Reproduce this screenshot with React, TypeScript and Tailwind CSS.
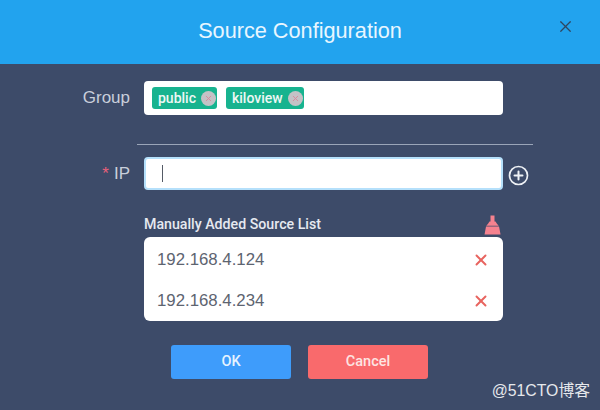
import React from 'react';
import { X } from 'lucide-react';

const FONT = "font-['Liberation_Sans',Arial,sans-serif]";

const Tag: React.FC<{ label: string }> = ({ label }) => (
  <span className="flex h-[22px] items-center rounded-[3px] bg-[#17b38f] pl-[6px] pr-[1px] font-['Roboto',sans-serif] text-[14px] font-medium text-[#eef8f5]">
    {label}
    <span className="ml-[5px] flex h-[15px] w-[15px] items-center justify-center rounded-full bg-[#c4c2c6]">
      <X size={9} strokeWidth={2.5} className="text-[#d98a9c]" />
    </span>
  </span>
);

const SourceRow: React.FC<{ ip: string }> = ({ ip }) => (
  <div className="flex h-[41px] items-center justify-between pl-[13px] pr-[13px] text-[16.8px] text-[#5d6470]">
    <span>{ip}</span>
    <X size={18} strokeWidth={2.6} className="text-[#e8645f]" />
  </div>
);

export default function App() {
  return (
    <div className={`relative flex h-[410px] w-[600px] flex-col overflow-hidden bg-[#3d4b69] ${FONT}`}>
      <div className="relative flex h-[64px] shrink-0 items-center justify-center bg-[#22a3ee] pb-[2px] text-[21.7px] text-[#e8f6ff]">
        Source Configuration
        <X size={19} strokeWidth={1.5} className="absolute right-[25px] top-[17px] text-[#2f4660]" />
      </div>

      <div className="mt-[17px] flex items-center">
        <div className="w-[130px] text-right text-[17px] text-[#c9cfdb]">Group</div>
        <div className="ml-[14px] flex h-[34px] w-[359px] items-center gap-[9px] rounded-[4px] bg-white pl-[8px]">
          <Tag label="public" />
          <Tag label="kiloview" />
        </div>
      </div>

      <div className="ml-[137px] mt-[29px] h-[1px] w-[396px] bg-[#9aa5b8]" />

      <div className="mt-[12px] flex items-center">
        <div className="w-[130px] text-right text-[17px] text-[#c9cfdb]">
          <span className="mr-[5px] text-[#e8607a]">*</span>IP
        </div>
        <div className="ml-[14px] flex h-[33px] w-[359px] items-center rounded-[4px] border-2 border-[#b5e0fb] bg-white pl-[16px]">
          <span className="h-[17px] w-[1px] bg-[#555b66]" />
        </div>
        <svg width="21" height="21" viewBox="0 0 21 21" fill="none" stroke="#eef1f5" strokeWidth="1.7" strokeLinecap="round" className="ml-[5px] mt-[4px]">
          <circle cx="10.5" cy="10.5" r="9" />
          <path d="M10.5 6.5v8M6.5 10.5h8" strokeWidth="2" />
        </svg>
      </div>

      <div className="ml-[144px] mt-[24px] flex h-[22px] w-[359px] items-center justify-between">
        <span className="font-['Roboto',sans-serif] text-[14.2px] font-medium text-[#e6e9f0]">Manually Added Source List</span>
        <svg width="17" height="20" viewBox="0 0 17 20" fill="#f5828f" className="mr-[2px]">
          <path d="M6.5 0.5h4v6.5h-4z" />
          <path d="M5.5 6.5h6c.8 1.6 2 3 3.2 4.2H2.3C3.5 9.5 4.7 8.1 5.5 6.5z" />
          <path d="M2 11.6h13L16.5 19.5H.5z" />
        </svg>
      </div>

      <div className="ml-[144px] mt-[1px] w-[359px] rounded-[6px] bg-white pt-[2px]">
        <SourceRow ip="192.168.4.124" />
        <SourceRow ip="192.168.4.234" />
      </div>

      <div className="ml-[171px] mt-[24px] flex gap-[17px]">
        <button className="h-[34px] w-[120px] rounded-[3px] bg-[#3e9cfb] font-['Roboto',sans-serif] text-[14.5px] font-medium text-[#e6f3ff]">OK</button>
        <button className="h-[34px] w-[120px] rounded-[3px] bg-[#f96a6c] font-['Roboto',sans-serif] text-[14.5px] font-medium text-[#fde4e2]">Cancel</button>
      </div>

      <div className="absolute bottom-[7px] right-[10px] font-['Liberation_Sans','Noto_Sans_CJK_SC',sans-serif] text-[15.8px] text-[#e6e8ec]">
        @51CTO博客
      </div>
    </div>
  );
}
